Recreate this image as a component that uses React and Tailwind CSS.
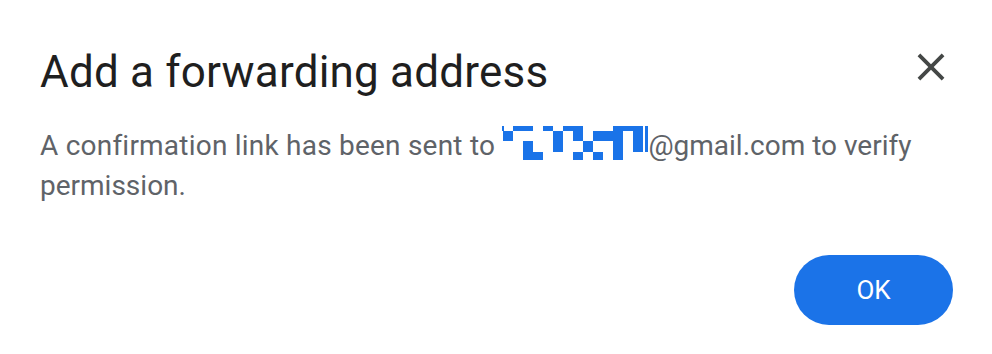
import React from 'react';

// redacted address blocks: [col, row] on a 10px grid
const BLOCKS = [
  [1, 0], [2, 0], [4, 0], [6, 0], [7, 0], [11, 0], [12, 0], [13, 0],
  [0, 1], [5, 1], [7, 1], [9, 1], [10, 1], [11, 1], [13, 1],
  [2, 2], [5, 2], [8, 2], [11, 2], [13, 2],
  [2, 3], [3, 3], [7, 3], [9, 3], [11, 3],
];
const ROWS = [
  { y: 0, h: 5 },
  { y: 5, h: 10 },
  { y: 15, h: 11 },
  { y: 26, h: 8 },
];

const Redacted = () => (
  <svg width="146" height="34" viewBox="0 0 146 34" className="inline-block align-[-5px]">
    <rect x="0" y="0" width="2" height="5" fill="#1a73e8" />
    {BLOCKS.map(([c, r], i) => (
      <rect key={i} x={c * 10 + 1} y={ROWS[r].y} width="10" height={ROWS[r].h} fill="#1a73e8" />
    ))}
    <rect x="143" y="0" width="3" height="26" fill="#1a73e8" />
  </svg>
);

export default function App() {
  return (
    <div className="w-[992px] h-[354px] bg-white font-['Roboto',sans-serif] pl-10 pr-10 pt-[46px]">
      <div className="flex items-start justify-between">
        <h1 className="text-[44px] leading-[52px] tracking-[0.2px] text-[#1f1f1f] font-normal">Add a forwarding address</h1>
        <button className="w-12 h-12 -mr-[3px] mt-[-3px] flex items-center justify-center text-[#444746]">
          <svg width="46" height="46" viewBox="0 0 24 24" fill="currentColor">
            <path d="M19 6.41 17.59 5 12 10.59 6.41 5 5 6.41 10.59 12 5 17.59 6.41 19 12 13.41 17.59 19 19 17.59 13.41 12z" />
          </svg>
        </button>
      </div>
      <p className="mt-[28px] text-[28px] leading-[40px] text-[#5f6368]">
        <span className="tracking-[0.22px]">A confirmation link has been sent to </span>
        <Redacted />@gmail.com to verify permission.
      </p>
      <div className="flex justify-end mt-[49px] -mr-[1px]">
        <button className="w-[159px] h-[70px] rounded-full bg-[#1b73e8] text-white text-[26px] font-normal">
          OK
        </button>
      </div>
    </div>
  );
}
